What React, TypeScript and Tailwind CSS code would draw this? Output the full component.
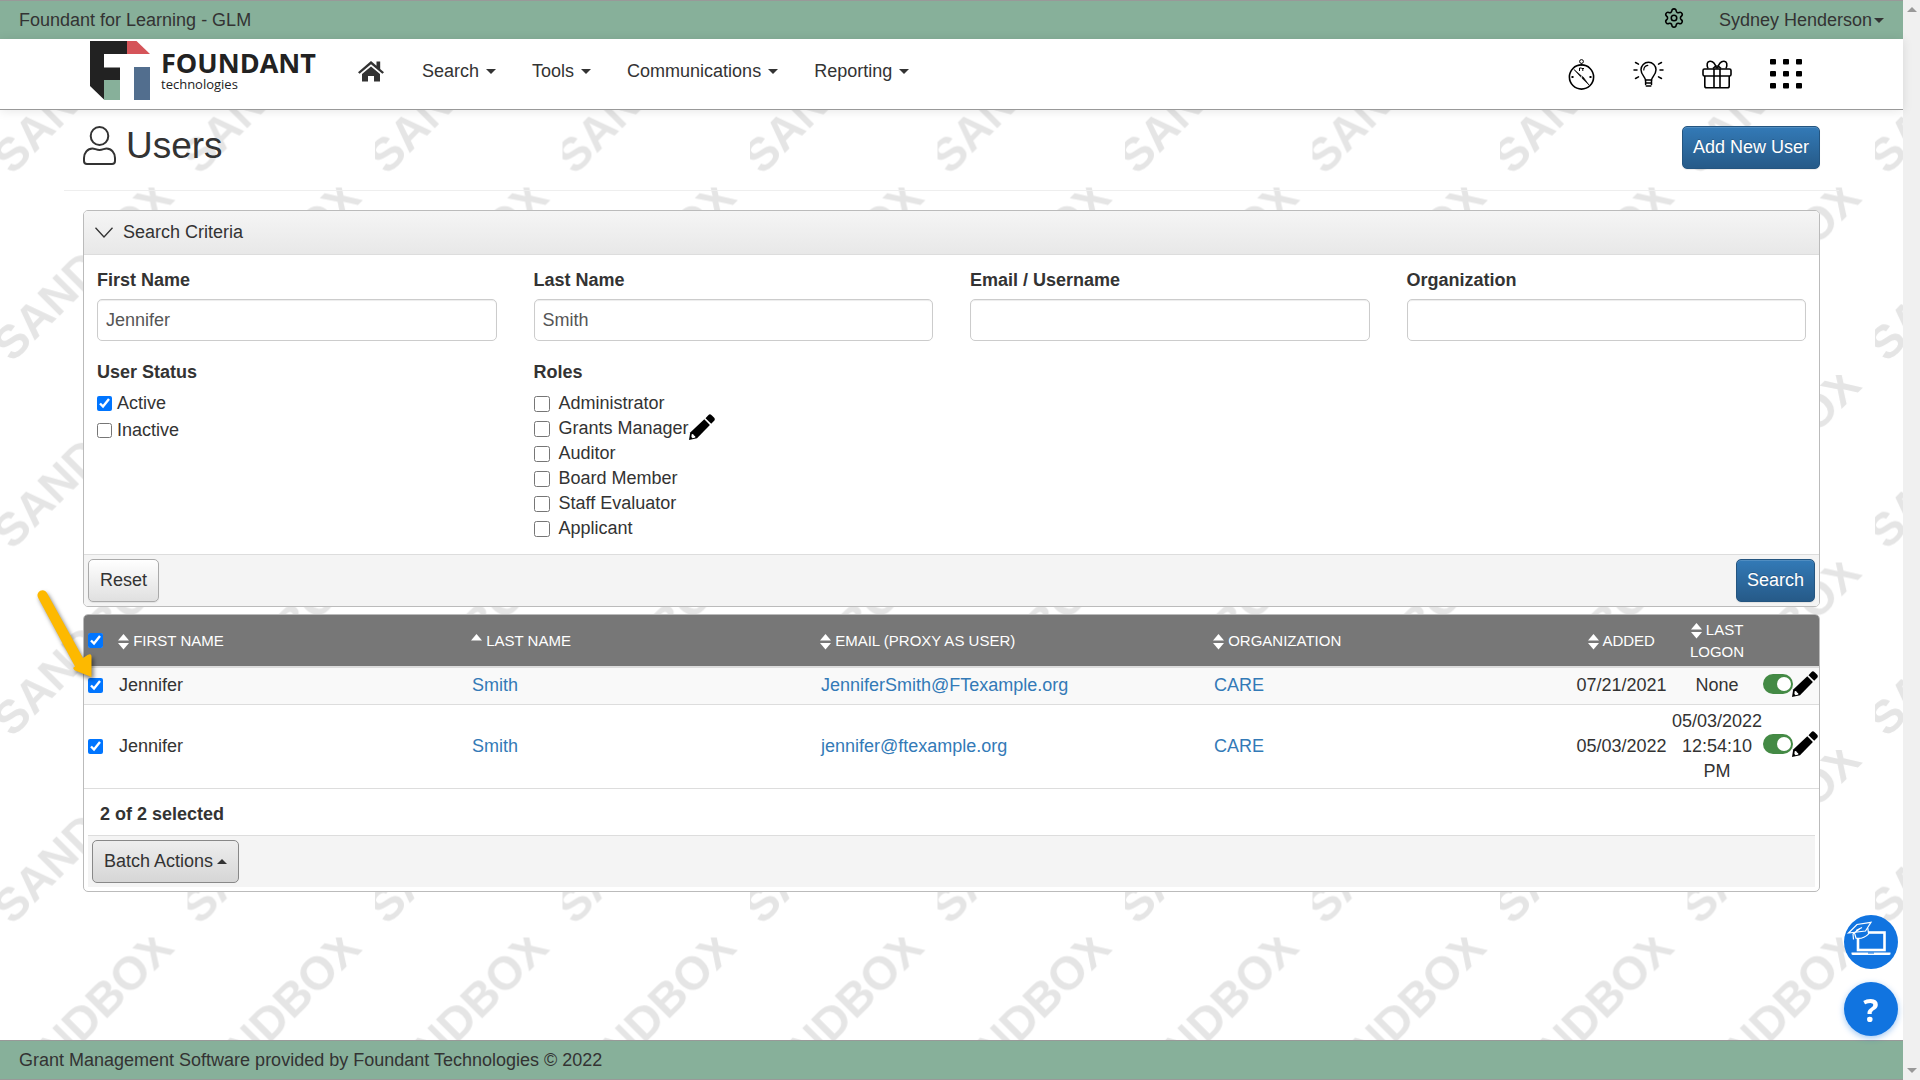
import { useState } from 'react';
import { Settings } from 'lucide-react';

const NAV_ITEMS = ['Search', 'Tools', 'Communications', 'Reporting'];

const TEXT_FIELDS = [
  { id: 'first-name', label: 'First Name', value: 'Jennifer' },
  { id: 'last-name', label: 'Last Name', value: 'Smith' },
  { id: 'email', label: 'Email / Username', value: '' },
  { id: 'organization', label: 'Organization', value: '' },
];

const ROLES = ['Administrator', 'Grants Manager', 'Auditor', 'Board Member', 'Staff Evaluator', 'Applicant'];

const USERS = [
  { first: 'Jennifer', last: 'Smith', email: 'JenniferSmith@FTexample.org', org: 'CARE', added: '07/21/2021', logon: 'None' },
  { first: 'Jennifer', last: 'Smith', email: 'jennifer@ftexample.org', org: 'CARE', added: '05/03/2022', logon: '05/03/2022 12:54:10 PM' },
];

const PRIMARY_BUTTON =
  'h-[43px] rounded-[5px] border border-[#245580] bg-linear-to-b from-[#337ab7] to-[#265a88] px-[10px] text-white shadow-[inset_0_1px_0_rgba(255,255,255,0.15),0_1px_1px_rgba(0,0,0,0.075)] [text-shadow:0_-1px_0_rgba(0,0,0,0.2)]';

// ---------- icons ----------

function Caret({ up = false }: { up?: boolean }) {
  return (
    <svg width="10" height="5" viewBox="0 0 10 5" className="shrink-0 fill-current" aria-hidden="true">
      <path d={up ? 'M0 5h10L5 0z' : 'M0 0h10L5 5z'} />
    </svg>
  );
}

function SortIcon({ only }: { only?: 'asc' }) {
  return (
    <svg width="11" height="16" viewBox="0 0 11 16" className="inline-block shrink-0 fill-white" aria-hidden="true">
      <path d="M0 6.5h11L5.5 0z" />
      {!only && <path d="M0 9h11l-5.500 6.500z" />}
    </svg>
  );
}

function PencilIcon() {
  return (
    <svg width="26" height="26" viewBox="0 0 26 26" aria-hidden="true">
      <path d="M16.500 4.200l3-3.300q1.400-1.200 2.900 0l2.800 2.800q1.200 1.500 0 3L22.200 9.800z" />
      <path d="M15.300 5.300l5.600 5.600L8 24.200 0 26l1.200-7.500z" />
      <path d="M2.700 20.200q1.900-.6 2.300 1.400 1.800.3 1.300 1.900l-2.700.7-1.200-1.200z" fill="#fff" />
    </svg>
  );
}

function HomeIcon() {
  return (
    <svg width="26" height="21" viewBox="0 0 26 21" fill="#333" aria-hidden="true">
      <path d="M13 0l5.500 4.700V.6h3.700v7.300L26 11.200l-1.600 1.600L13 3.200 1.600 12.800 0 11.200z" />
      <path d="M13 5.500l9 7.600V20.500h-6V15h-6v5.500H4v-7.400z" />
    </svg>
  );
}

function UserIcon() {
  return (
    <svg width="33" height="39" viewBox="0 0 33 39" fill="none" stroke="#333" strokeWidth="2" aria-hidden="true">
      <ellipse cx="16.500" cy="10" rx="8.800" ry="9" />
      <path d="M9.500 22.500c2.200 0 4 1.500 7 1.500s4.800-1.500 7-1.500c5 0 8.500 4.500 8.500 9.500v3c0 2-1 3-3 3H4c-2 0-3-1-3-3v-3c0-5 3.500-9.500 8.500-9.500z" />
    </svg>
  );
}

function CompassIcon() {
  return (
    <svg width="27" height="31" viewBox="0 0 27 31" fill="none" stroke="#000" aria-hidden="true">
      <circle cx="13.500" cy="18" r="12.100" strokeWidth="1.600" />
      <circle cx="13.500" cy="2.500" r="1.900" strokeWidth="1" />
      <path d="M13.500 4.500v2M11.500 12V9h2M13.500 9.500h2.500M14.800 9.500V12" strokeWidth="1" />
      <path d="M6 10.500l6.800 7.500 1.300 1.300L21 26l-5.800-8-1.700-1z" fill="#000" strokeWidth=".6" />
      <circle cx="13.500" cy="18" r=".8" fill="#fff" stroke="none" />
      <path d="M3.500 18h2M21.500 18h2" strokeWidth="1.800" />
    </svg>
  );
}

function BulbIcon() {
  return (
    <svg width="31" height="27" viewBox="0 0 31 27" fill="none" stroke="#000" strokeWidth="1.500" strokeLinecap="round" aria-hidden="true">
      <path d="M12.500 19c0-3-4.500-5-4.500-10.200a7.500 7.500 0 0 1 15 0C23 14 18.500 16 18.500 19z" />
      <path d="M10.800 9c0-2.500 1.700-4.300 4-4.700" strokeWidth="1.200" />
      <path d="M12.800 22h5.600M13.300 25h4.500M12.600 19v4.500M18.500 19v4.500" />
      <path d="M1 9h3M27 9h3M2.500 1.500l3 1.600M28.500 1.500l-3 1.600M2.500 17.500l3-1.600M28.500 17.500l-3-1.600" />
    </svg>
  );
}

function GiftIcon() {
  return (
    <svg width="30" height="29" viewBox="0 0 30 29" fill="none" stroke="#000" strokeWidth="1.600" strokeLinejoin="round" aria-hidden="true">
      <rect x="1" y="9" width="28" height="7" rx="1.500" />
      <path d="M2.800 16v10q0 1.800 1.800 1.800h20.800q1.800 0 1.800-1.800V16M12 9v18.800M18 9v18.800" />
      <path d="M14.500 8.500C13.500 4.500 11 1 8 1.200 5 1.400 4.400 4.500 6 8.500M15.500 8.500C16.500 4.500 19 1 22 1.200c3 .2 3.600 3.300 2 7.300M11 8.500q2-2.500 4-2.500t4 2.500" />
    </svg>
  );
}

function GridIcon() {
  return (
    <svg width="32" height="30" viewBox="0 0 32 30" aria-hidden="true">
      {[0, 12, 24].map((y) =>
        [0, 13, 26].map((x) => <rect key={`${x}-${y}`} x={x} y={y} width="6" height="5.500" rx="1" />)
      )}
    </svg>
  );
}

function LearnIcon() {
  return (
    <svg width="54" height="54" viewBox="0 0 54 54" fill="none" stroke="#fff" aria-hidden="true">
      <rect x="14" y="17.500" width="26.500" height="17.500" strokeWidth="2.600" />
      <path d="M7.500 37.500h39v1.500q0 1-1.500 1H9q-1.500 0-1.500-1z" fill="#fff" stroke="none" />
      <path d="M24 37.500h6v1h-6z" fill="#1174e0" stroke="none" />
      <path d="M9.500 16.500l2 7.500h11q2.500-3.500 2-9.500z" fill="#1174e0" stroke="none" />
      <path d="M4.500 18L13 9.500l14-2.200-5.500 8.700z" fill="#1174e0" strokeWidth="1.200" />
      <path d="M10.500 17.800l1.500 5.400c5 .8 10-1.700 12.600-4.400l-.8-5.800M16 13.500l-7 5.500.5 5.500M12 15.500l6-3" strokeWidth="1.200" />
    </svg>
  );
}

function Logo() {
  return (
    <a href="#home" className="flex w-[232px] gap-[11px] text-[#222]" aria-label="Foundant technologies">
      <svg width="60" height="59" viewBox="0 0 60 59" className="shrink-0" aria-hidden="true">
        <path d="M0 0h37v13H14v13.500h16V39H14v19.500L0 45z" fill="#222" />
        <path d="M37 0h9.500L60 13H37z" fill="#d55459" />
        <path d="M14 39h16v20H14z" fill="#87b09a" />
        <path d="M44 26h16v33H44z" fill="#526e8e" />
      </svg>
      <span className="flex flex-col pt-2 font-['Open_Sans',sans-serif]">
        <span className="text-[27px] leading-[28px] font-bold">FOUNDANT</span>
        <span className="text-[13px] leading-[14px] font-medium">technologies</span>
      </span>
    </a>
  );
}

// Repeating tile behind the page content
function Watermark() {
  return (
    <svg className="absolute inset-0 -z-10 h-full w-full" aria-hidden="true">
      <defs>
        <pattern id="sandbox" width="150" height="150" patternUnits="userSpaceOnUse" patternTransform="scale(1.25)">
          <text
            transform="translate(66 66) rotate(-45)"
            y="13"
            textAnchor="middle"
            className="fill-[#e5e5e5] font-['Liberation_Sans',sans-serif] text-[37px] font-bold"
          >
            SANDBOX
          </text>
        </pattern>
      </defs>
      <rect width="100%" height="100%" fill="url(#sandbox)" />
    </svg>
  );
}

// ---------- sections ----------

function TopBar() {
  return (
    <header className="flex h-[39px] items-center justify-between border-t border-[#999] bg-[#87b09a] px-[19px]">
      <span>Foundant for Learning - GLM</span>
      <div className="flex items-center gap-[34px]">
        <button type="button" aria-label="Settings" className="pb-1 text-black">
          <Settings size={22} strokeWidth={1.7} />
        </button>
        <button type="button" className="flex items-center gap-[2px]">
          Sydney Henderson <Caret />
        </button>
      </div>
    </header>
  );
}

function NavBar() {
  return (
    <nav className="flex h-[71px] items-start justify-between border-b border-[#999] bg-white pt-[2px] pr-[101px] pl-[90px] shadow-[0_1px_10px_rgba(0,0,0,0.1)]">
      <div className="flex">
        <Logo />
        <div className="flex h-[60px] items-center gap-9 pl-9">
          <a href="#home" aria-label="Home" className="mr-[2px]">
            <HomeIcon />
          </a>
          {NAV_ITEMS.map((item) => (
            <button key={item} type="button" className="flex items-center gap-[7px]">
              {item} <Caret />
            </button>
          ))}
        </div>
      </div>
      <div className="flex h-[66px] items-center gap-[38px]">
        <button type="button" aria-label="Compass"><CompassIcon /></button>
        <button type="button" aria-label="Ideas"><BulbIcon /></button>
        <button type="button" aria-label="What's new"><GiftIcon /></button>
        <button type="button" aria-label="Apps"><GridIcon /></button>
      </div>
    </nav>
  );
}

function SearchPanel() {
  return (
    <section className="overflow-hidden rounded-[5px] border border-[#bbb] bg-white">
      <h2 className="flex h-[44px] items-center gap-[10px] border-b border-[#ddd] bg-linear-to-b from-[#f5f5f5] to-[#e8e8e8] px-[11px]">
        <svg width="18" height="11" viewBox="0 0 18 11" fill="none" stroke="#333" strokeWidth="1.300" aria-hidden="true">
          <path d="M.5 .8L9 10 17.500 .8" />
        </svg>
        Search Criteria
      </h2>

      <form onSubmit={(e) => e.preventDefault()}>
        <div className="grid grid-cols-4 gap-x-[37px] px-[13px] pt-[13px] pb-[13px]">
          {TEXT_FIELDS.map((field) => (
            <div key={field.id} className="mb-[19px]">
              <label htmlFor={field.id} className="mb-[6px] block font-bold">
                {field.label}
              </label>
              <input
                id={field.id}
                type="text"
                defaultValue={field.value}
                className="h-[42px] w-full rounded-[5px] border border-[#ccc] px-2 text-[#555] shadow-[inset_0_1px_1px_rgba(0,0,0,0.075)]"
              />
            </div>
          ))}

          <fieldset>
            <legend className="mb-[6px] font-bold">User Status</legend>
            <label className="mb-[2px] flex items-center gap-[5px]">
              <input type="checkbox" defaultChecked className="size-[15px]" />
              Active
            </label>
            <label className="flex items-center gap-[5px]">
              <input type="checkbox" className="size-[15px]" />
              Inactive
            </label>
          </fieldset>

          <fieldset>
            <legend className="mb-[6px] font-bold">Roles</legend>
            {ROLES.map((role) => (
              <div key={role} className="flex h-[25px] items-center">
                <label className="flex items-center gap-[9px]">
                  <input type="checkbox" className="size-4" />
                  {role}
                </label>
                {role === 'Grants Manager' && (
                  <button type="button" aria-label="Edit Grants Manager" className="pb-1">
                    <PencilIcon />
                  </button>
                )}
              </div>
            ))}
          </fieldset>
        </div>

        <div className="flex items-center justify-between border-t border-[#ddd] bg-[#f4f4f4] p-1">
          <button
            type="reset"
            className="h-[43px] rounded-[5px] border border-[#aaa] bg-linear-to-b from-white to-[#e0e0e0] px-[11px] shadow-[0_1px_1px_rgba(0,0,0,0.075)]"
          >
            Reset
          </button>
          <button type="submit" className={PRIMARY_BUTTON}>
            Search
          </button>
        </div>
      </form>
    </section>
  );
}

function UsersTable() {
  const [checked, setChecked] = useState([true, true]);
  const count = checked.filter(Boolean).length;

  return (
    <section className="relative mt-[7px] rounded-[5px] border border-[#bbb] bg-white">
      <table className="w-full table-fixed">
        <colgroup>
          <col className="w-7" />
          <col className="w-[353px]" />
          <col className="w-[349px]" />
          <col className="w-[393px]" />
          <col />
          <col className="w-[99px]" />
          <col className="w-[92px]" />
          <col className="w-[56px]" />
        </colgroup>
        <thead>
          <tr className="h-[52px] border-b-2 border-[#ddd] bg-[#777] text-left text-[15px] leading-[22px] text-white uppercase *:font-normal">
            <th className="rounded-tl-[4px] pl-1">
              <input
                type="checkbox"
                aria-label="Select all users"
                checked={count === USERS.length}
                onChange={(e) => setChecked(USERS.map(() => e.target.checked))}
                className="block size-[15px]"
              />
            </th>
            <th className="px-[6px]"><SortIcon /> First Name</th>
            <th className="px-[6px]"><SortIcon only="asc" /> Last Name</th>
            <th className="px-[6px]"><SortIcon /> Email (Proxy as User)</th>
            <th className="px-[6px]"><SortIcon /> Organization</th>
            <th className="text-center"><SortIcon /> Added</th>
            <th className="text-center"><SortIcon /> Last Logon</th>
            <th className="rounded-tr-[4px]" aria-label="Actions" />
          </tr>
        </thead>
        <tbody>
          {USERS.map((user, i) => (
            <tr key={user.email} className="h-[37px] border-b border-[#ddd] odd:bg-[#f9f9f9]">
              <td className="pl-1">
                <input
                  type="checkbox"
                  aria-label={`Select ${user.email}`}
                  checked={checked[i]}
                  onChange={() => setChecked(checked.map((c, n) => (n === i ? !c : c)))}
                  className="block size-[15px]"
                />
              </td>
              <td className="px-[7px]">{user.first}</td>
              <td className="px-[7px]"><a href="#user" className="text-[#337ab7]">{user.last}</a></td>
              <td className="px-[7px]"><a href="#proxy" className="text-[#337ab7]">{user.email}</a></td>
              <td className="px-[7px]"><a href="#org" className="text-[#337ab7]">{user.org}</a></td>
              <td className="text-center">{user.added}</td>
              <td className="py-1 text-center">{user.logon}</td>
              <td>
                <div className="flex items-center pb-1">
                  <button
                    type="button"
                    role="switch"
                    aria-checked="true"
                    aria-label="Active"
                    className="flex h-5 w-[30px] shrink-0 items-center justify-end rounded-full bg-[#448a45] pr-[2px]"
                  >
                    <span className="size-[14px] rounded-full bg-white" />
                  </button>
                  <button type="button" aria-label="Edit user" className="-ml-px shrink-0">
                    <PencilIcon />
                  </button>
                </div>
              </td>
            </tr>
          ))}
        </tbody>
      </table>

      <p className="px-4 pt-[13px] pb-2 font-bold">{count} of {USERS.length} selected</p>
      <div className="mx-1 mb-1 border-t border-[#ddd] bg-[#f4f4f4] p-1">
        <button
          type="button"
          className="flex h-[43px] items-center gap-1 rounded-[5px] border border-[#888] bg-linear-to-b from-[#eee] to-[#d6d6d6] px-[11px]"
        >
          Batch Actions <Caret up />
        </button>
      </div>

      {/* callout pointing at the row checkboxes */}
      <svg width="72" height="100" viewBox="0 0 72 100" className="pointer-events-none absolute -top-[30px] -left-[55px] drop-shadow-[2px_3px_2px_rgba(0,0,0,0.5)]" aria-hidden="true">
        <path d="M9 12.500a5 5 0 0 1 9-4.500L54 73l4.500-3q4-2 4 1.500L62.500 92 46 85.500q-3.500-2.500 0-4z" fill="#fdb900" />
      </svg>
    </section>
  );
}

export default function App() {
  return (
    <div className="flex min-h-screen bg-white font-['Liberation_Sans',Arial,sans-serif] text-[18px] leading-[25px] text-[#333]">
      <div className="relative isolate flex min-w-0 flex-1 flex-col">
        <Watermark />
        <TopBar />
        <NavBar />

        <main className="flex-1 px-16">
          <div className="flex h-[81px] items-start justify-between border-b border-[#eee] px-[19px] pt-4">
            <h1 className="flex items-center gap-[10px] text-[37px] leading-[39px]">
              <UserIcon /> Users
            </h1>
            <button type="button" className={PRIMARY_BUTTON}>
              Add New User
            </button>
          </div>
          <div className="px-[19px] pt-[19px]">
            <SearchPanel />
            <UsersTable />
          </div>
        </main>

        <footer className="flex h-10 items-center border-y border-[#999] bg-[#87b09a] px-[19px]">
          Grant Management Software provided by Foundant Technologies © 2022
        </footer>

        {/* floating help buttons */}
        <div className="fixed right-[22px] bottom-[44px] flex flex-col items-end gap-[13px]">
          <button type="button" aria-label="Learning" className="size-[54px] rounded-full bg-[#1174e0]">
            <LearnIcon />
          </button>
          <button
            type="button"
            aria-label="Help"
            className="flex size-[54px] items-center justify-center rounded-full bg-[#1174e0] font-['Open_Sans',sans-serif] text-[32px] font-bold text-white shadow-[0_2px_6px_rgba(17,116,224,0.4)]"
          >
            ?
          </button>
        </div>
      </div>

      <div className="flex w-[17px] shrink-0 flex-col items-center justify-between bg-[#f0f0f0] py-[7px] text-[#999]">
        <Caret up />
        <Caret />
      </div>
    </div>
  );
}
